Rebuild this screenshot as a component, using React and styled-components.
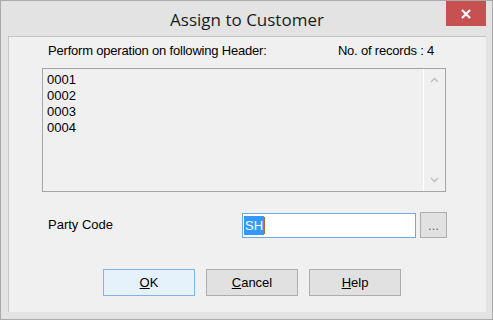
import React from "react";
import styled, { createGlobalStyle } from "styled-components";

const Global = createGlobalStyle`
  html, body { margin: 0; padding: 0; background: #e3e3e3; }
  * { box-sizing: border-box; }
`;

const Window = styled.div`
  width: 493px;
  height: 320px;
  border: 1px solid #aaaaaa;
  background: #e3e3e3;
  padding: 0 6px 7px 7px;
  display: flex;
  flex-direction: column;
  font-family: "Liberation Sans", Arial, sans-serif;
  font-size: 13px;
  color: #000;
`;

const TitleBar = styled.div`
  height: 35px;
  display: grid;
  grid-template-columns: 40px 1fr 40px;
  align-items: start;
`;

const Title = styled.div`
  grid-column: 2;
  text-align: center;
  font-family: "Open Sans", "Noto Sans", sans-serif;
  font-size: 17px;
  line-height: 24px;
  padding-top: 7px;
  color: #1b1b1b;
`;

const CloseButton = styled.div`
  grid-column: 3;
  width: 40px;
  height: 25px;
  background: #c75050;
  display: flex;
  align-items: center;
  justify-content: center;
`;

const Client = styled.div`
  flex: 1;
  background: #f0f0f0;
  border-top: 1px solid #c4c4c4;
  border-left: 1px solid #c4c4c4;
  display: flex;
  flex-direction: column;
`;

const HeaderRow = styled.div`
  margin: 6px 52px 0 39px;
  height: 16px;
  line-height: 16px;
  display: flex;
  justify-content: space-between;
  letter-spacing: -0.2px;
`;

const ListBox = styled.div`
  margin: 9px 40px 0 33px;
  height: 124px;
  border: 1px solid #a5a5a5;
  display: flex;
`;

const ListItems = styled.div`
  flex: 1;
  padding: 3px 4px;
  line-height: 16px;
`;

const ScrollBar = styled.div`
  width: 22px;
  border-left: 1px solid #ffffff;
  display: flex;
  flex-direction: column;
  justify-content: space-between;
  align-items: center;
  padding: 8px 0 8px;
`;

const PartyRow = styled.div`
  margin: 20px 0 0 39px;
  display: grid;
  grid-template-columns: 190px 174px 27px;
  column-gap: 4px;
  align-items: center;
  height: 26px;
`;

const Label = styled.div`
  line-height: 16px;
`;

const TextBox = styled.div`
  height: 25px;
  border: 1px solid #6fa8e8;
  background: #fff;
  display: flex;
  align-items: center;
  padding-left: 1px;
`;

const Selected = styled.span`
  background: #3399ff;
  color: #fff;
  line-height: 19px;
  padding: 0 1px;
`;

const Caret = styled.span`
  width: 1px;
  height: 17px;
  background: #b06a2a;
`;

const BrowseButton = styled.div`
  height: 26px;
  background: #e1e1e1;
  border: 1px solid #adadad;
  display: flex;
  align-items: flex-end;
  justify-content: center;
  padding-bottom: 5px;
  color: #6c5a7a;
  line-height: 12px;
`;

const ButtonRow = styled.div`
  margin: 31px 0 0 94px;
  display: flex;
  gap: 11px;
`;

const Button = styled.div`
  width: 92px;
  height: 27px;
  border: 1px solid ${(p) => (p.$default ? "#7eb4ea" : "#adadad")};
  background: ${(p) => (p.$default ? "#e5f1fb" : "#e1e1e1")};
  display: flex;
  align-items: center;
  justify-content: center;
  line-height: 16px;
`;

const Chevron = ({ up }) => (
  <svg width="9" height="6" viewBox="0 0 9 6">
    <path
      d={up ? "M1 5 L4.5 1.5 L8 5" : "M1 1 L4.5 4.5 L8 1"}
      fill="none"
      stroke="#c2c2c2"
      strokeWidth="1.6"
    />
  </svg>
);

export default function App() {
  return (
    <>
      <Global />
      <Window>
        <TitleBar>
          <Title>Assign to Customer</Title>
          <CloseButton>
            <svg width="10" height="10" viewBox="0 0 10 10">
              <path d="M1 1 L9 9 M9 1 L1 9" stroke="#fff" strokeWidth="2.2" />
            </svg>
          </CloseButton>
        </TitleBar>
        <Client>
          <HeaderRow>
            <span>Perform operation on following Header:</span>
            <span>No. of records : 4</span>
          </HeaderRow>
          <ListBox>
            <ListItems>
              <div>0001</div>
              <div>0002</div>
              <div>0003</div>
              <div>0004</div>
            </ListItems>
            <ScrollBar>
              <Chevron up />
              <Chevron />
            </ScrollBar>
          </ListBox>
          <PartyRow>
            <Label>Party Code</Label>
            <TextBox>
              <Selected>SH</Selected>
              <Caret />
            </TextBox>
            <BrowseButton>...</BrowseButton>
          </PartyRow>
          <ButtonRow>
            <Button $default>
              <span><u>O</u>K</span>
            </Button>
            <Button>
              <span><u>C</u>ancel</span>
            </Button>
            <Button>
              <span><u>H</u>elp</span>
            </Button>
          </ButtonRow>
        </Client>
      </Window>
    </>
  );
}
